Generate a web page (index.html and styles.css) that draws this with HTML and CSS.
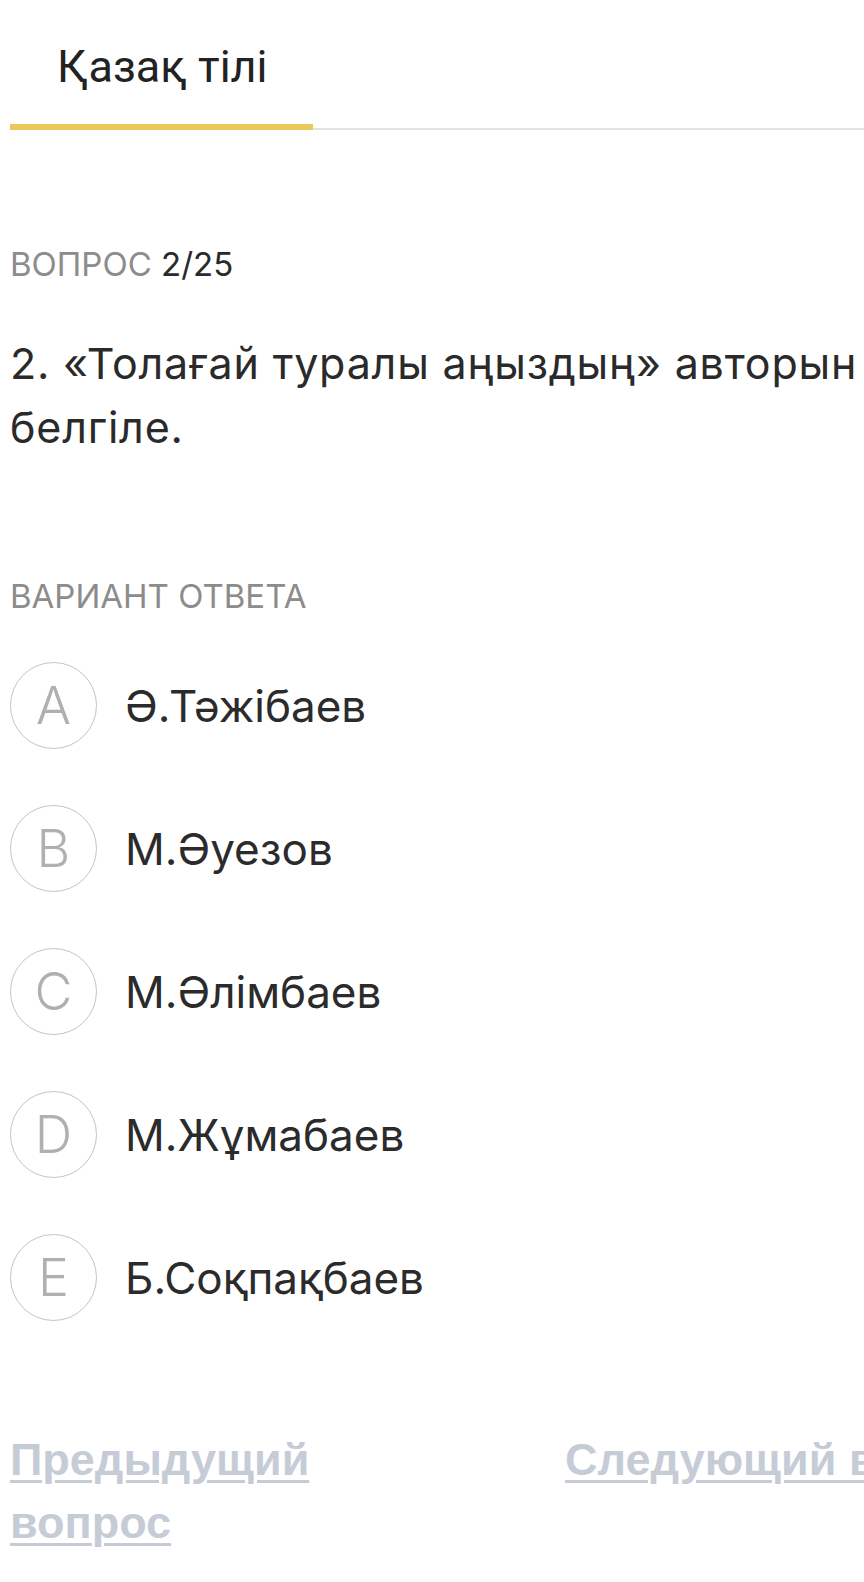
FILE: index.html
```html
<!DOCTYPE html>
<html lang="ru">

<head>
    <meta charset="UTF-8">
    <meta name="viewport" content="width=device-width, initial-scale=1.0">
    <title>Қазақ тілі</title>
    <link rel="stylesheet" href="styles.css">
</head>

<body>
    <div class="tabs">
        <div class="tab active">Қазақ тілі</div>
    </div>

    <div class="page">
        <div class="label">ВОПРОС <span class="count">2/25</span></div>

        <p class="question">2. «Толағай туралы аңыздың» авторын белгіле.</p>

        <div class="label">ВАРИАНТ ОТВЕТА</div>

        <div class="answers">
            <div class="answer"><span class="letter">A</span><span class="answer-text">Ә.Тәжібаев</span></div>
            <div class="answer"><span class="letter">B</span><span class="answer-text">М.Әуезов</span></div>
            <div class="answer"><span class="letter">C</span><span class="answer-text">М.Әлімбаев</span></div>
            <div class="answer"><span class="letter">D</span><span class="answer-text">М.Жұмабаев</span></div>
            <div class="answer"><span class="letter">E</span><span class="answer-text">Б.Соқпақбаев</span></div>
        </div>

        <div class="nav">
            <a href="#" class="nav-link prev">Предыдущий вопрос</a>
            <a href="#" class="nav-link next">Следующий вопрос</a>
        </div>
    </div>
</body>

</html>
```

FILE: styles.css
```css
body {
    margin: 0;
    background: #fff;
    font-family: 'Inter', 'Noto Sans', sans-serif;
    color: #2a2a2a;
    overflow: hidden;
}

/* Tabs */
.tabs {
    display: flex;
    margin-left: 10px;
    border-bottom: 2px solid #e4e4e4;
}

.tab {
    width: 256px;
    padding: 41px 0 31px 47px;
    font-family: 'Roboto', sans-serif;
    font-size: 45px;
    line-height: 52px;
    color: #222;
    margin-bottom: -2px;
}

.tab.active {
    border-bottom: 6px solid #e9c95b;
    border-radius: 3px 3px 0 0;
}

.page {
    padding: 0 10px;
}

.label {
    margin-top: 114px;
    font-size: 33px;
    line-height: 40px;
    color: #8c8c8c;
}

.count {
    color: #2a2a2a;
}

.question {
    width: 900px;
    margin: 47px 0 117px;
    font-size: 43px;
    line-height: 64px;
    letter-spacing: 0.8px;
}

.question + .label {
    margin-top: 0;
}

/* Answer options */
.answers {
    display: flex;
    flex-direction: column;
    gap: 56px;
    margin-top: 46px;
}

.answer {
    display: flex;
    align-items: center;
    gap: 28px;
}

.letter {
    display: flex;
    justify-content: center;
    align-items: center;
    flex: 0 0 auto;
    width: 85px;
    height: 85px;
    border: 1px solid #c4c4c4;
    border-radius: 50%;
    font-size: 52px;
    font-weight: 300;
    color: #b0b0b0;
}

.answer-text {
    font-size: 44px;
    color: #2b2b2b;
}

/* Bottom navigation */
.nav {
    display: grid;
    grid-template-columns: 330px 1fr;
    column-gap: 225px;
    margin-top: 107px;
    padding-bottom: 40px;
}

.nav-link {
    font-family: 'Liberation Sans', Arial, sans-serif;
    font-weight: bold;
    font-size: 45px;
    line-height: 63px;
    color: #c6ccd6;
    text-decoration-thickness: 3px;
    text-underline-offset: 5px;
}

.next {
    white-space: nowrap;
}
```
